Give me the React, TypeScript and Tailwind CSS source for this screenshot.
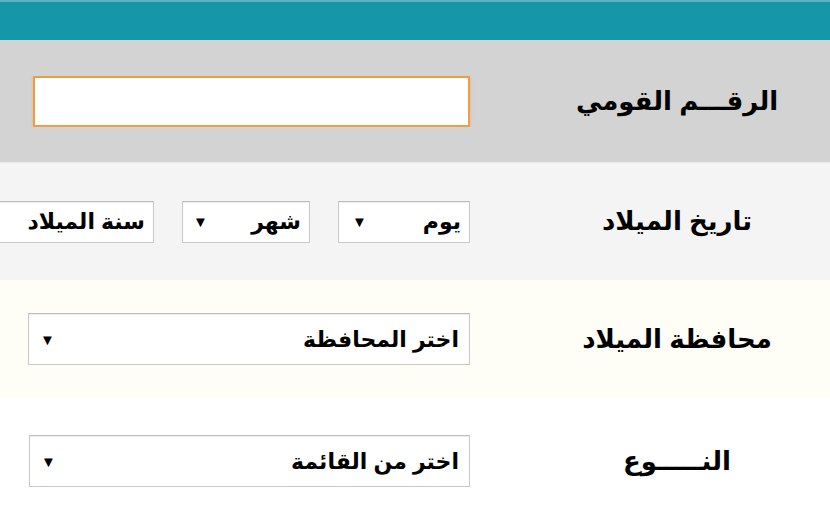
import React from 'react';

const font = { fontFamily: '"Liberation Sans", "DejaVu Sans", sans-serif' };

function SelectBox({ text, className }: { text: string; className: string }) {
  return (
    <div
      className={`flex shrink-0 items-center justify-between bg-white border border-[#c9c9c9] border-t-[#bdbdbd] shadow-[inset_0_1px_1px_rgba(0,0,0,0.08)] ${className}`}
    >
      <span className="font-bold text-black">{text}</span>
      <span className="text-[15px] leading-none text-black">▼</span>
    </div>
  );
}

function Row({ label, bg, height, children }: { label: string; bg: string; height: string; children: React.ReactNode }) {
  return (
    <div className={`flex items-center overflow-hidden ${bg} ${height}`}>
      <div className="w-[306px] shrink-0 text-center text-[26px] font-bold text-black">{label}</div>
      <div className="flex flex-1 items-center gap-[28px] overflow-hidden pr-[54px]">{children}</div>
    </div>
  );
}

export default function App() {
  return (
    <div dir="rtl" className="w-[830px] h-[506px] overflow-hidden bg-white" style={font}>
      <div className="h-[40px] bg-[#1597a9] border-t-2 border-[#5fb3bd]" />

      <Row label="الرقـــم القومي" bg="bg-[#d3d3d3] border-b border-[#e8e8e8]" height="h-[123px]">
        <input
          type="text"
          className="w-[437px] h-[51px] bg-white border-2 border-[#f29b45] outline-none shadow-[0_0_2px_rgba(242,155,69,0.6)]"
        />
      </Row>

      <Row label="تاريخ الميلاد" bg="bg-[#f4f4f4]" height="h-[117px]">
        <SelectBox text="يوم" className="w-[132px] h-[42px] pr-[8px] pl-[13px] text-[22px]" />
        <SelectBox text="شهر" className="w-[128px] h-[42px] pr-[8px] pl-[10px] text-[22px]" />
        <SelectBox text="سنة الميلاد" className="w-[196px] h-[42px] pr-[8px] pl-[13px] text-[22px]" />
      </Row>

      <Row label="محافظة الميلاد" bg="bg-[#fffef6]" height="h-[118px]">
        <SelectBox text="اختر المحافظة" className="w-[442px] h-[52px] pr-[10px] pl-[11px] text-[22px]" />
      </Row>

      <Row label="النـــــوع" bg="bg-white" height="h-[126px]">
        <SelectBox text="اختر من القائمة" className="w-[441px] h-[52px] pr-[10px] pl-[11px] text-[22px]" />
      </Row>
    </div>
  );
}
